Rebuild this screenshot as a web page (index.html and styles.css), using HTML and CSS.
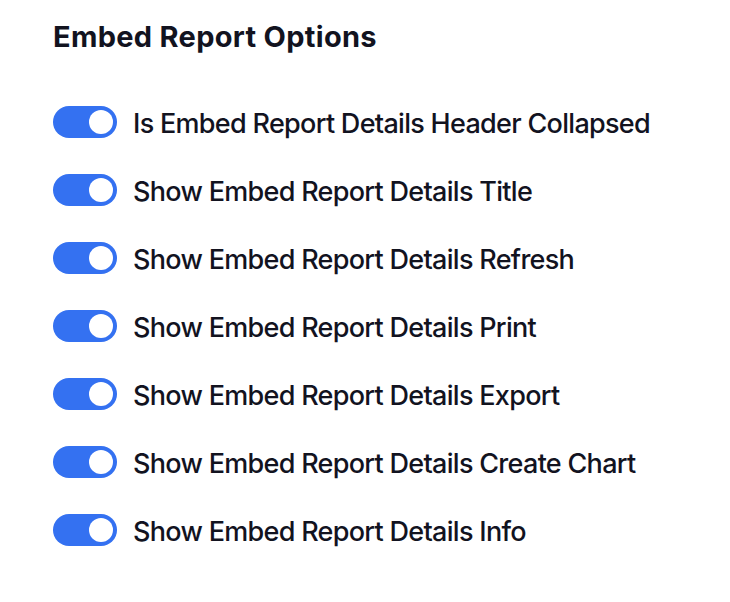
FILE: index.html
```html
<!DOCTYPE html>
<html lang="en">
<head>
  <meta charset="UTF-8" />
  <title>Embed Report Options</title>
  <link rel="stylesheet" href="styles.css">
</head>
<body>
  <div class="options-panel">
    <h2 class="options-title">Embed Report Options</h2>

    <div class="option-list">
      <label class="option-row">
        <input type="checkbox" checked>
        <span class="switch"></span>
        <span class="option-label">Is Embed Report Details Header Collapsed</span>
      </label>
      <label class="option-row">
        <input type="checkbox" checked>
        <span class="switch"></span>
        <span class="option-label">Show Embed Report Details Title</span>
      </label>
      <label class="option-row">
        <input type="checkbox" checked>
        <span class="switch"></span>
        <span class="option-label">Show Embed Report Details Refresh</span>
      </label>
      <label class="option-row">
        <input type="checkbox" checked>
        <span class="switch"></span>
        <span class="option-label">Show Embed Report Details Print</span>
      </label>
      <label class="option-row">
        <input type="checkbox" checked>
        <span class="switch"></span>
        <span class="option-label">Show Embed Report Details Export</span>
      </label>
      <label class="option-row">
        <input type="checkbox" checked>
        <span class="switch"></span>
        <span class="option-label">Show Embed Report Details Create Chart</span>
      </label>
      <label class="option-row">
        <input type="checkbox" checked>
        <span class="switch"></span>
        <span class="option-label">Show Embed Report Details Info</span>
      </label>
    </div>
  </div>
</body>
</html>
```

FILE: styles.css
```css
:root {
  --blue: #3471f1;
  --text: #12131f;
}

* {
  box-sizing: border-box;
}

body {
  margin: 0;
  padding: 0;
  font-family: Inter, 'Noto Sans', sans-serif;
  background: #fff;
  color: var(--text);
}

.options-panel {
  padding: 19px 53px;
}

.options-title {
  margin: 0 0 51px;
  font-size: 29px;
  line-height: 36px;
  font-weight: 700;
  letter-spacing: 0.3px;
}

.option-list {
  display: flex;
  flex-direction: column;
  gap: 36px;
}

.option-row {
  display: flex;
  align-items: center;
  gap: 16px;
  height: 32px;
  cursor: pointer;
}

.option-row input {
  display: none;
}

.switch {
  position: relative;
  flex: none;
  width: 64px;
  height: 32px;
  border-radius: 16px;
  background: #d0d5dd;
}

.switch::after {
  content: "";
  position: absolute;
  top: 4px;
  left: 4px;
  width: 24px;
  height: 24px;
  border-radius: 50%;
  background: #fff;
  transition: left 0.2s;
}

.option-row input:checked + .switch {
  background: var(--blue);
}

.option-row input:checked + .switch::after {
  left: 36px;
}

.option-label {
  padding-top: 4px;
  font-size: 27px;
  line-height: 28px;
  font-weight: 500;
  letter-spacing: -0.7px;
}
```
